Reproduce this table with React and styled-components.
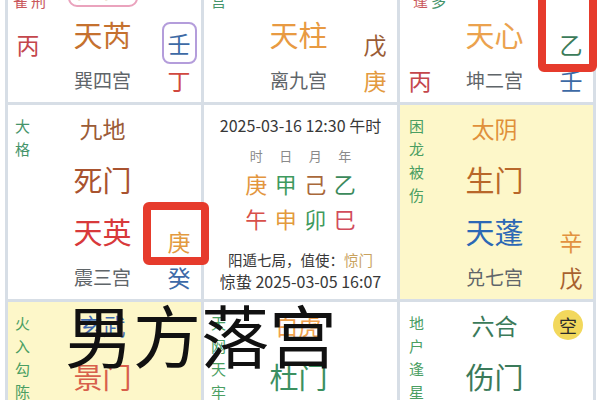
import React from "react";
import styled, { createGlobalStyle } from "styled-components";

const GlobalStyle = createGlobalStyle`
  html, body {
    margin: 0;
    padding: 0;
    background: #fff;
  }
  body {
    font-family: "Noto Sans CJK SC", "Noto Sans", sans-serif;
    overflow: hidden;
  }
`;

const Page = styled.div`
  position: relative;
  width: 600px;
  height: 400px;
  overflow: hidden;
  padding-left: 5px;
  box-sizing: border-box;
`;

// the chart itself, scrolled so the top row is cut off
const Board = styled.div`
  display: grid;
  grid-template-columns: repeat(3, 193px);
  grid-template-rows: repeat(3, 194px);
  gap: 3px;
  border: 3px solid #d7dee6;
  background: #d7dee6;
  width: max-content;
  margin-top: -95px;
`;

const Cell = styled.div`
  background: ${(p) => (p.$hl ? "#fdf7c9" : "#fff")};
  display: grid;
  grid-template-columns: 40px 1fr 44px;
  grid-template-rows: 46px 56px 48px 44px;
  overflow: hidden;
`;

const Tags = styled.div`
  grid-column: 1;
  grid-row: 1 / 3;
  display: flex;
  gap: 3px;
  padding: ${(p) => p.$top || 9}px 0 0 ${(p) => p.$left || 7}px;
`;

const TagCol = styled.div`
  width: 15px;
  font-size: 15px;
  line-height: 23px;
  color: ${(p) => p.$c || "#45946a"};
  word-break: break-all;
`;

const God = styled.div`
  grid-column: 2;
  grid-row: 1;
  justify-self: center;
  align-self: center;
  font-size: 23px;
  line-height: 30px;
  color: ${(p) => p.$c};
`;

const Door = styled.div`
  grid-column: 2;
  grid-row: 2;
  justify-self: center;
  align-self: ${(p) => (p.$boxed ? "end" : "center")};
  font-size: 29px;
  line-height: 36px;
  color: ${(p) => p.$c};
  ${(p) =>
    p.$boxed &&
    `
    border: 2px solid #eaa3bd;
    border-radius: 9px;
    width: 70px;
    height: 44px;
    box-sizing: border-box;
    display: flex;
    align-items: center;
    justify-content: center;
    margin-bottom: 3px;
  `}
`;

const Star = styled.div`
  grid-column: 2;
  grid-row: 3;
  justify-self: center;
  align-self: center;
  font-size: 29px;
  line-height: 36px;
  color: ${(p) => p.$c};
`;

const Palace = styled.div`
  grid-column: 2;
  grid-row: 4;
  justify-self: center;
  align-self: center;
  font-size: 19px;
  line-height: 26px;
  color: #5f6569;
`;

const Stem = styled.div`
  grid-column: ${(p) => p.$col};
  grid-row: ${(p) => p.$row};
  justify-self: center;
  align-self: ${(p) => (p.$row === 3 ? "end" : "center")};
  font-size: 23px;
  line-height: 28px;
  color: ${(p) => p.$c};
  ${(p) =>
    p.$boxed &&
    `
    border: 2px solid #b49ddb;
    border-radius: 8px;
    width: 35px;
    height: 42px;
    box-sizing: border-box;
    display: flex;
    align-items: center;
    justify-content: center;
    margin-bottom: -6px;
  `}
`;

const Badge = styled.div`
  grid-column: 3;
  grid-row: 1;
  justify-self: center;
  align-self: center;
  width: 30px;
  height: 30px;
  border-radius: 50%;
  background: #f2d85c;
  color: #2b2b2b;
  font-size: 18px;
  display: flex;
  align-items: center;
  justify-content: center;
  margin-left: -6px;
`;

const CenterCell = styled.div`
  background: #fff;
  display: flex;
  flex-direction: column;
  align-items: center;
  padding-top: 9px;
  color: #333;
`;

const DateLine = styled.div`
  font-size: 16px;
  line-height: 22px;
  color: #383838;
  margin-top: ${(p) => p.$mt || 0}px;
`;

const PillarGrid = styled.div`
  display: grid;
  grid-template-columns: repeat(4, 29.5px);
  justify-items: center;
  margin-top: ${(p) => p.$mt}px;
`;

const PillarHead = styled.div`
  font-size: 13px;
  line-height: 18px;
  color: #8a8a8a;
`;

const PillarChar = styled.div`
  font-size: 22px;
  line-height: 30px;
  color: ${(p) => p.$c};
`;

const InfoLine = styled.div`
  font-size: 14.5px;
  line-height: 21px;
  color: #383838;
  margin-top: ${(p) => p.$mt || 0}px;
`;

const Accent = styled.span`
  color: #c9a25e;
`;

// red highlight frames drawn on top of the screenshot
const Mark = styled.div`
  position: absolute;
  left: ${(p) => p.$x}px;
  top: ${(p) => p.$y}px;
  width: ${(p) => p.$w}px;
  height: ${(p) => p.$h}px;
  border: 8px solid #e63b2c;
  border-radius: 6px;
  box-sizing: border-box;
`;

const Caption = styled.div`
  position: absolute;
  left: 65px;
  top: 300px;
  font-size: 68px;
  line-height: 1;
  color: #111;
  white-space: nowrap;
`;

const App = () => {
  return (
    <Page>
      <GlobalStyle />
      <Board>
        {/* 巽四宫 */}
        <Cell>
          <Tags $top={12} $left={5}>
            <TagCol $c="#c9585c">投江朱雀</TagCol>
            <TagCol $c="#c9585c">六仪击刑</TagCol>
          </Tags>
          <God $c="#3d6aa8">九天</God>
          <Door $c="#c9a25e" $boxed>惊门</Door>
          <Star $c="#c5712f">天芮</Star>
          <Palace>巽四宫</Palace>
          <Stem $col={1} $row={3} $c="#c4474c">丙</Stem>
          <Stem $col={3} $row={3} $c="#3d6aa5" $boxed>壬</Stem>
          <Stem $col={3} $row={4} $c="#d0483f">丁</Stem>
        </Cell>
        {/* 离九宫 */}
        <Cell>
          <Tags $top={12} $left={7}>
            <TagCol>天乙伏宫</TagCol>
          </Tags>
          <God $c="#c5712f">值符</God>
          <Door $c="#3d8a5a">开门</Door>
          <Star $c="#e89a42">天柱</Star>
          <Palace>离九宫</Palace>
          <Stem $col={3} $row={3} $c="#9a5c36">戊</Stem>
          <Stem $col={3} $row={4} $c="#e39a40">庚</Stem>
        </Cell>
        {/* 坤二宫 */}
        <Cell>
          <Tags $top={12} $left={13}>
            <TagCol $c="#c9585c">时干相逢</TagCol>
            <TagCol>奇仪吉多</TagCol>
          </Tags>
          <God $c="#c9585c">螣蛇</God>
          <Door $c="#3d6aa8">休门</Door>
          <Star $c="#eba24e">天心</Star>
          <Palace>坤二宫</Palace>
          <Stem $col={1} $row={4} $c="#c4474c">丙</Stem>
          <Stem $col={3} $row={3} $c="#3b7b5a">乙</Stem>
          <Stem $col={3} $row={4} $c="#3d6aa5">壬</Stem>
        </Cell>

        {/* 震三宫 */}
        <Cell>
          <Tags>
            <TagCol>大格</TagCol>
          </Tags>
          <God $c="#9b5b37">九地</God>
          <Door $c="#a9532f">死门</Door>
          <Star $c="#d8393b">天英</Star>
          <Palace>震三宫</Palace>
          <Stem $col={3} $row={3} $c="#e39a40">庚</Stem>
          <Stem $col={3} $row={4} $c="#3d6aa8">癸</Stem>
        </Cell>
        {/* 中宫 */}
        <CenterCell>
          <DateLine>2025-03-16 12:30 午时</DateLine>
          <PillarGrid $mt={11}>
            <PillarHead>时</PillarHead>
            <PillarHead>日</PillarHead>
            <PillarHead>月</PillarHead>
            <PillarHead>年</PillarHead>
          </PillarGrid>
          <PillarGrid $mt={3}>
            <PillarChar $c="#e3963e">庚</PillarChar>
            <PillarChar $c="#3f9a5e">甲</PillarChar>
            <PillarChar $c="#a9683a">己</PillarChar>
            <PillarChar $c="#3c8a5c">乙</PillarChar>
          </PillarGrid>
          <PillarGrid $mt={5}>
            <PillarChar $c="#d8504a">午</PillarChar>
            <PillarChar $c="#e39a3c">申</PillarChar>
            <PillarChar $c="#3f9a5e">卯</PillarChar>
            <PillarChar $c="#d24c5c">巳</PillarChar>
          </PillarGrid>
          <InfoLine $mt={16}>
            阳遁七局，值使：<Accent>惊门</Accent>
          </InfoLine>
          <DateLine>惊蛰 2025-03-05 16:07</DateLine>
        </CenterCell>
        {/* 兑七宫 */}
        <Cell $hl>
          <Tags $left={9}>
            <TagCol $c="#4a9e62">困龙被伤</TagCol>
          </Tags>
          <God $c="#e0903a">太阴</God>
          <Door $c="#b8672a">生门</Door>
          <Star $c="#2c68b5">天蓬</Star>
          <Palace>兑七宫</Palace>
          <Stem $col={3} $row={3} $c="#e29240">辛</Stem>
          <Stem $col={3} $row={4} $c="#a8612f">戊</Stem>
        </Cell>

        {/* 艮八宫 */}
        <Cell $hl>
          <Tags $left={7}>
            <TagCol $c="#4a9e62">火入勾陈</TagCol>
          </Tags>
          <God $c="#3d6ab0">玄武</God>
          <Door $c="#d8604c">景门</Door>
          <Star $c="#3d8a5a">天辅</Star>
          <Palace>艮八宫</Palace>
        </Cell>
        {/* 坎一宫 */}
        <Cell>
          <Tags $left={7}>
            <TagCol $c="#4a9e62">天网天牢</TagCol>
          </Tags>
          <God $c="#f0a24e">白虎</God>
          <Door $c="#3b9060">杜门</Door>
          <Star $c="#3d8a5a">天冲</Star>
          <Palace>坎一宫</Palace>
        </Cell>
        {/* 乾六宫 */}
        <Cell>
          <Tags $left={9}>
            <TagCol $c="#4a9e62">地户逢星</TagCol>
          </Tags>
          <God $c="#3b7a5a">六合</God>
          <Badge>空</Badge>
          <Door $c="#3b7a5a">伤门</Door>
          <Star $c="#e0903a">天任</Star>
          <Palace>乾六宫</Palace>
        </Cell>
      </Board>

      <Mark $x={538} $y={-10} $w={59} $h={82} />
      <Mark $x={143} $y={202} $w={66} $h={63} />
      <Caption>男方落宫</Caption>
    </Page>
  );
};

export default App;
